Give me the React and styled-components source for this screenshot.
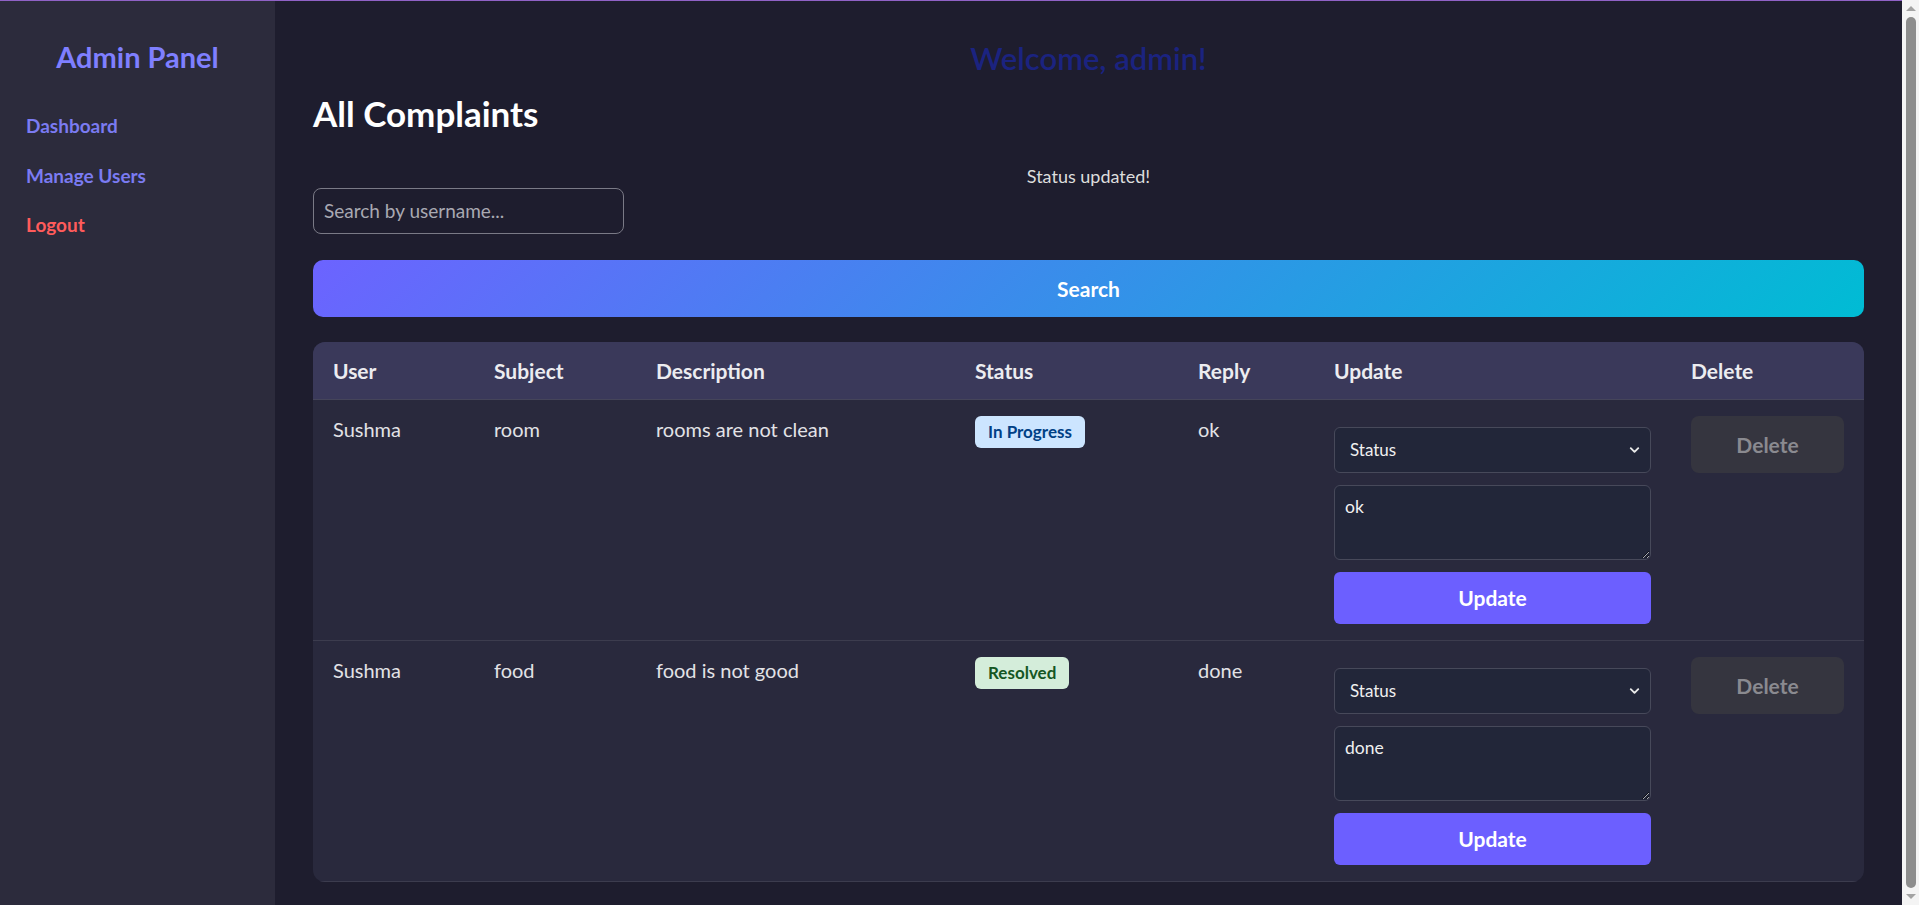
import React, { useState } from 'react';
import styled, { createGlobalStyle } from 'styled-components';
import { ChevronDown } from 'lucide-react';

const complaints = [
  {
    id: 1,
    user: 'Sushma',
    subject: 'room',
    description: 'rooms are not clean',
    status: 'In Progress',
    reply: 'ok',
  },
  {
    id: 2,
    user: 'Sushma',
    subject: 'food',
    description: 'food is not good',
    status: 'Resolved',
    reply: 'done',
  },
];

const columns = [
  { label: 'User', width: 161 },
  { label: 'Subject', width: 162 },
  { label: 'Description', width: 319 },
  { label: 'Status', width: 223 },
  { label: 'Reply', width: 136 },
  { label: 'Update', width: 357 },
  { label: 'Delete', width: 193 },
];

export default function App() {
  const [query, setQuery] = useState('');
  const [message] = useState('Status updated!');

  return (
    <>
      <GlobalStyle />
      <Layout>
        {/* sidebar */}
        <Sidebar>
          <Brand>Admin Panel</Brand>
          <Nav>
            <NavLink href="#">Dashboard</NavLink>
            <NavLink href="#">Manage Users</NavLink>
            <NavLink href="#" $danger>
              Logout
            </NavLink>
          </Nav>
        </Sidebar>

        {/* content */}
        <Main>
          <Welcome>Welcome, admin!</Welcome>
          <Title>All Complaints</Title>
          <Message>{message}</Message>
          <SearchInput
            placeholder="Search by username..."
            value={query}
            onChange={e => setQuery(e.target.value)}
          />
          <SearchBtn>Search</SearchBtn>

          <TableWrap>
            <Table>
              <colgroup>
                {columns.map(c => (
                  <col key={c.label} style={{ width: c.width }} />
                ))}
              </colgroup>
              <thead>
                <tr>
                  {columns.map(c => (
                    <Th key={c.label}>{c.label}</Th>
                  ))}
                </tr>
              </thead>
              <tbody>
                {complaints.map(c => (
                  <tr key={c.id}>
                    <Td>{c.user}</Td>
                    <Td>{c.subject}</Td>
                    <Td>{c.description}</Td>
                    <Td>
                      <Badge $status={c.status}>{c.status}</Badge>
                    </Td>
                    <Td>{c.reply}</Td>
                    <Td>
                      <UpdateStack>
                        <SelectWrap>
                          <Select defaultValue="">
                            <option value="">Status</option>
                            <option value="Pending">Pending</option>
                            <option value="In Progress">In Progress</option>
                            <option value="Resolved">Resolved</option>
                          </Select>
                          <Chevron>
                            <ChevronDown size={15} strokeWidth={3} />
                          </Chevron>
                        </SelectWrap>
                        <ReplyBox defaultValue={c.reply} />
                        <UpdateBtn>Update</UpdateBtn>
                      </UpdateStack>
                    </Td>
                    <Td>
                      <DeleteBtn disabled>Delete</DeleteBtn>
                    </Td>
                  </tr>
                ))}
              </tbody>
            </Table>
          </TableWrap>
        </Main>
      </Layout>

      {/* window scrollbar */}
      <ScrollTrack>
        <Arrow />
        <Thumb />
        <Arrow $down />
      </ScrollTrack>
    </>
  );
}

const GlobalStyle = createGlobalStyle`
  * {
    box-sizing: border-box;
  }
  html, body {
    margin: 0;
    background: #1e1d2e;
    font-family: 'Lato', 'Liberation Sans', sans-serif;
  }
`;

const Layout = styled.div`
  display: flex;
  min-height: 100vh;
  padding-right: 17px;
  border-top: 1px solid #9062c6;
`;

const Sidebar = styled.aside`
  width: 275px;
  flex-shrink: 0;
  background: #2c2b3c;
  padding: 39px 26px;
`;

const Brand = styled.h2`
  margin: 0;
  text-align: center;
  font-size: 29px;
  font-weight: 700;
  line-height: 1.2;
  color: #7f7fff;
`;

const Nav = styled.nav`
  display: flex;
  flex-direction: column;
  gap: 27px;
  margin-top: 40px;
`;

const NavLink = styled.a`
  font-size: 19px;
  font-weight: 700;
  line-height: 1.2;
  text-decoration: none;
  color: ${props => (props.$danger ? '#ff5b5b' : '#7b7bf2')};
`;

const Main = styled.main`
  flex: 1;
  min-width: 0;
  padding: 39px 38px 38px;
`;

const Welcome = styled.h2`
  margin: 0;
  text-align: center;
  font-size: 31px;
  font-weight: 600;
  line-height: 1.2;
  color: #1b2380;
`;

const Title = styled.h1`
  margin: 15px 0 0;
  font-size: 35px;
  font-weight: 700;
  line-height: 1.2;
  color: #ffffff;
`;

const Message = styled.p`
  margin: 32px 0 0;
  text-align: center;
  font-size: 18px;
  line-height: 1.2;
  color: #dddddd;
`;

const SearchInput = styled.input`
  display: block;
  width: 311px;
  height: 46px;
  padding: 0 10px;
  border: 1px solid #7a7a86;
  border-radius: 8px;
  background: #1e1d2e;
  color: #e0e0e0;
  font-family: inherit;
  font-size: 19px;
  outline: none;
  &::placeholder {
    color: #a9a9b2;
  }
`;

const SearchBtn = styled.button`
  display: block;
  width: 100%;
  height: 57px;
  margin-top: 26px;
  border: 0;
  border-radius: 10px;
  background: linear-gradient(135deg, #6c63ff, #00bcd4);
  color: #ffffff;
  font-family: inherit;
  font-size: 21px;
  font-weight: 700;
  cursor: pointer;
`;

const TableWrap = styled.div`
  margin-top: 25px;
  border-radius: 12px;
  overflow: hidden;
  background: #29293d;
`;

const Table = styled.table`
  width: 100%;
  table-layout: fixed;
  border-collapse: collapse;
`;

const Th = styled.th`
  padding: 16px 20px;
  background: #3a395a;
  border-bottom: 1px solid #45455a;
  text-align: left;
  font-size: 21px;
  font-weight: 700;
  line-height: 1.2;
  color: #ececf0;
`;

const Td = styled.td`
  padding: 16px 20px;
  vertical-align: top;
  border-bottom: 1px solid #3c3c4e;
  font-size: 20px;
  line-height: 1.3;
  color: #e2e2e6;
`;

const Badge = styled.span`
  display: inline-block;
  height: 32px;
  padding: 0 13px;
  border-radius: 6px;
  font-size: 17px;
  font-weight: 700;
  line-height: 32px;
  background: ${props =>
    props.$status === 'Resolved' ? '#d4edda' : '#cce5ff'};
  color: ${props => (props.$status === 'Resolved' ? '#155724' : '#004085')};
`;

const UpdateStack = styled.div`
  display: flex;
  flex-direction: column;
  gap: 12px;
  padding-top: 11px;
`;

const SelectWrap = styled.div`
  position: relative;
`;

const Select = styled.select`
  appearance: none;
  width: 100%;
  height: 46px;
  padding: 0 30px 0 15px;
  border: 1px solid #47495a;
  border-radius: 6px;
  background: #222639;
  color: #f0f0f0;
  font-family: inherit;
  font-size: 17px;
  outline: none;
`;

const Chevron = styled.span`
  position: absolute;
  right: 9px;
  top: 50%;
  transform: translateY(-50%);
  display: flex;
  color: #e8e8e8;
  pointer-events: none;
`;

const ReplyBox = styled.textarea`
  display: block;
  width: 100%;
  height: 75px;
  padding: 10px 10px;
  border: 1px solid #47495a;
  border-radius: 6px;
  background: #222639;
  color: #f0f0f0;
  font-family: inherit;
  font-size: 17.5px;
  outline: none;
`;

const UpdateBtn = styled.button`
  height: 52px;
  border: 0;
  border-radius: 6px;
  background: #6c5fff;
  color: #ffffff;
  font-family: inherit;
  font-size: 21px;
  font-weight: 700;
  cursor: pointer;
`;

const DeleteBtn = styled.button`
  width: 100%;
  height: 57px;
  border: 0;
  border-radius: 8px;
  background: #35353f;
  color: #8a8a90;
  font-family: inherit;
  font-size: 21px;
  font-weight: 700;
`;

const ScrollTrack = styled.div`
  position: fixed;
  top: 0;
  right: 0;
  bottom: 0;
  width: 17px;
  background: #f4f4f4;
  display: flex;
  flex-direction: column;
  align-items: center;
  padding: 6px 0;
  gap: 6px;
`;

const Arrow = styled.span`
  width: 0;
  height: 0;
  border-left: 5px solid transparent;
  border-right: 5px solid transparent;
  ${props =>
    props.$down
      ? 'border-top: 5px solid #a3a3a3;'
      : 'border-bottom: 5px solid #a3a3a3;'}
`;

const Thumb = styled.span`
  flex: 1;
  width: 10px;
  border-radius: 5px;
  background: #8d8d8d;
`;
